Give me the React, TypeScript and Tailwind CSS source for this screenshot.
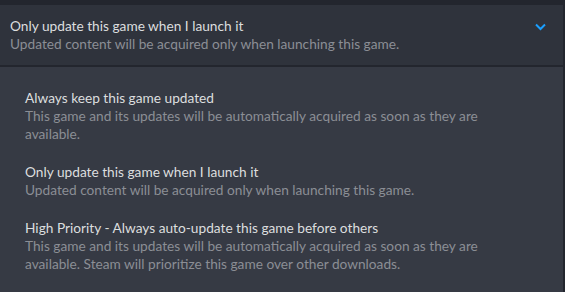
const options = [
    {
        title: "Always keep this game updated",
        desc: "This game and its updates will be automatically acquired as soon as they are available.",
    },
    {
        title: "Only update this game when I launch it",
        desc: "Updated content will be acquired only when launching this game.",
    },
    {
        title: "High Priority - Always auto-update this game before others",
        desc: "This game and its updates will be automatically acquired as soon as they are available. Steam will prioritize this game over other downloads.",
    },
];

const App = () => {
    return (
        <div className="w-[565px] h-[292px] overflow-hidden bg-[#23262e] pt-[5px] pr-[2px] font-['Lato',sans-serif]">
            <div className="flex items-start justify-between h-[60px] bg-[#2f333c] pt-[12px] pl-[10px] pr-[17px]">
                <div className="flex flex-col">
                    <span className="text-[13.7px] leading-[18px] text-[#dcdedf]">Only update this game when I launch it</span>
                    <span className="text-[13.7px] leading-[18px] text-[#8b8e95]">Updated content will be acquired only when launching this game.</span>
                </div>
                <svg width="11" height="8" viewBox="0 0 11 8" className="mt-[6px]">
                    <polyline points="1,1.5 5.5,6 10,1.5" fill="none" stroke="#1a9fff" strokeWidth="2" />
                </svg>
            </div>
            <div className="mt-[2px] h-[300px] bg-[#363a44] pt-[22px] pl-[25px] pr-[30px]">
                {options.map((o) => (
                    <div key={o.title} className="flex flex-col pb-[20px]">
                        <span className="text-[13.7px] leading-[18px] text-[#dcdedf]">{o.title}</span>
                        <span className="text-[13.7px] leading-[18px] text-[#8b8e95]">{o.desc}</span>
                    </div>
                ))}
            </div>
        </div>
    );
};

export default App;
